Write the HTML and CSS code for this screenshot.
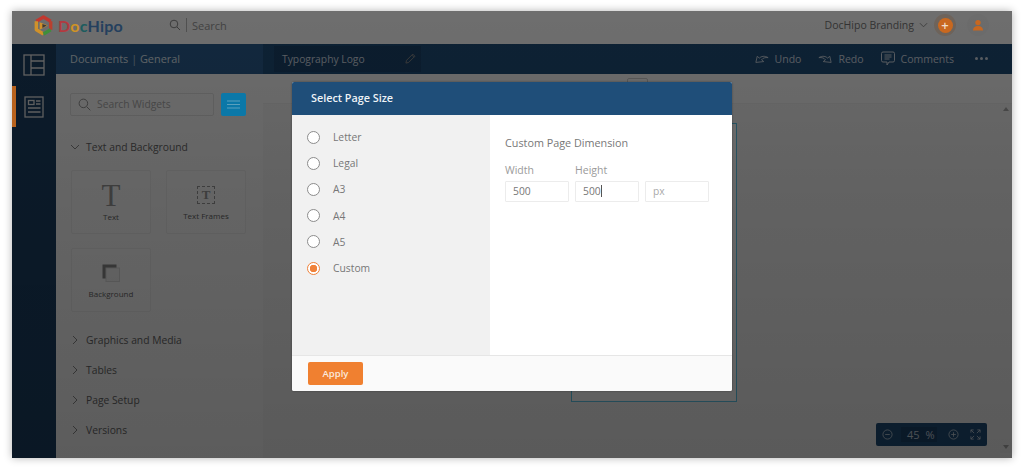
FILE: index.html
```html
<!DOCTYPE html>
<html lang="en">
<head>
<meta charset="utf-8">
<title>DocHipo</title>
<link rel="stylesheet" href="styles.css">
</head>
<body>
<div class="window">
  <header class="topbar">
    <div class="logo">
      <svg class="logo-mark" viewBox="0 0 22 22" width="21" height="21" fill="none" stroke-width="3.600" stroke-linejoin="round">
        <path d="M3.500 6.500L11 2.200 18.500 6.500" stroke="#c2382f"/>
        <path d="M18.500 6.500V15.500" stroke="#b9402f"/>
        <path d="M3.500 6.500V15.500L11 19.800" stroke="#d0912a"/>
        <path d="M11 19.800L18.500 15.500" stroke="#3f8f3c"/>
        <path d="M7 7.500L15.500 11 7 15.500Z" fill="#d0912a" stroke="none"/>
        <path d="M9.800 9.300L14.500 11 9.800 13.500Z" fill="#3a3a3a" stroke="none"/>
      </svg>
      <span class="logo-text"><span class="l-d">D</span><span class="l-o">o</span><span class="l-c">c</span><span class="l-h">Hipo</span></span>
    </div>
    <div class="top-search">
      <svg viewBox="0 0 12 12" width="12" height="12" class="ico-line"><circle cx="5" cy="5" r="3.800"/><path d="M8 8l3 3"/></svg>
      <span class="sep"></span>
      <span>Search</span>
    </div>
    <div class="top-right">
      <span class="brand">DocHipo Branding</span>
      <svg viewBox="0 0 10 6" width="9" height="6" class="ico-line"><path d="M1 1l4 4 4-4"/></svg>
      <span class="plus-ring"><span class="plus">+</span></span>
      <span class="user-ring">
        <svg viewBox="0 0 12 12" width="12" height="12"><circle cx="6" cy="3.600" r="2.700"/><path d="M1 11.500c0-3 2-4.500 5-4.500s5 1.500 5 4.500z"/></svg>
      </span>
    </div>
  </header>

  <div class="main">
    <nav class="rail">
      <div class="rail-item">
        <svg viewBox="0 0 22 22" width="22" height="22" class="rail-ico"><rect x="1" y="1" width="20" height="20"/><path d="M8 1v20M8 7h13M8 14h13"/></svg>
      </div>
      <div class="rail-item active">
        <svg viewBox="0 0 20 22" width="20" height="22" class="rail-ico"><rect x="1" y="1" width="18" height="20"/><rect x="4.500" y="4.500" width="5.500" height="4"/><path d="M12 5h4.500M12 8h4.500M4 12h12.500M4 16h12.500"/></svg>
      </div>
    </nav>

    <aside class="panel">
      <div class="panel-head">Documents <span class="bar">|</span> General</div>
      <div class="widget-search">
        <div class="search-box">
          <svg viewBox="0 0 14 14" width="13" height="13" class="ico-line"><circle cx="5.800" cy="5.800" r="4.600"/><path d="M9.300 9.300l4 4"/></svg>
          <span>Search Widgets</span>
        </div>
        <div class="list-btn">
          <svg viewBox="0 0 13 9" width="13" height="9"><path d="M0 1h13M0 4.500h13M0 8h13" stroke="#5aa0bd" stroke-width="1.200"/></svg>
        </div>
      </div>
      <div class="section open">
        <svg viewBox="0 0 10 6" width="10" height="6" class="ico-line"><path d="M1 1l4 4 4-4"/></svg>
        <span>Text and Background</span>
      </div>
      <div class="cards">
        <div class="card">
          <span class="big-t">T</span>
          <span class="card-label">Text</span>
        </div>
        <div class="card">
          <span class="frame-t">T</span>
          <span class="card-label">Text Frames</span>
        </div>
        <div class="card">
          <svg viewBox="0 0 18 18" width="18" height="18" class="bg-ico"><rect x="0.500" y="0.500" width="14" height="14" fill="#8a8a8a"/><rect x="4" y="4" width="13.500" height="13.500" fill="#f5f5f5" stroke="#dcdcdc"/></svg>
          <span class="card-label">Background</span>
        </div>
      </div>
      <div class="section"><svg viewBox="0 0 6 10" width="6" height="10" class="ico-line"><path d="M1 1l4 4-4 4"/></svg><span>Graphics and Media</span></div>
      <div class="section"><svg viewBox="0 0 6 10" width="6" height="10" class="ico-line"><path d="M1 1l4 4-4 4"/></svg><span>Tables</span></div>
      <div class="section"><svg viewBox="0 0 6 10" width="6" height="10" class="ico-line"><path d="M1 1l4 4-4 4"/></svg><span>Page Setup</span></div>
      <div class="section"><svg viewBox="0 0 6 10" width="6" height="10" class="ico-line"><path d="M1 1l4 4-4 4"/></svg><span>Versions</span></div>
      <div class="collapse-tab"><svg viewBox="0 0 4 6" width="4" height="6" class="ico-line"><path d="M3.500 .5L1 3l2.500 2.500"/></svg></div>
    </aside>

    <section class="work">
      <div class="toolbar">
        <div class="doc-title">
          <span>Typography Logo</span>
          <svg viewBox="0 0 12 12" width="11" height="11" class="ico-line"><path d="M1 11l.7-3L8.500 1.200l2.300 2.300L4 10.300zM7.500 2.300l2.300 2.300"/></svg>
        </div>
        <div class="tools">
          <span class="tool"><svg viewBox="0 0 16 12" width="14" height="11" class="ico-tool"><path d="M1 10.500L2.500 3.500 5 5.500C7 3.500 11 2.500 15 5 11.500 4.500 9 5.500 7.500 7.500L10 9.500z"/></svg>Undo</span>
          <span class="tool"><svg viewBox="0 0 16 12" width="14" height="11" class="ico-tool"><path d="M15 10.500L13.500 3.500 11 5.500C9 3.500 5 2.500 1 5 4.500 4.500 7 5.500 8.500 7.500L6 9.500z"/></svg>Redo</span>
          <span class="tool"><svg viewBox="0 0 14 15" width="14" height="15" class="ico-tool"><path d="M2 1h10a1.500 1.500 0 0 1 1.500 1.500v7A1.500 1.500 0 0 1 12 11H8l-2 3v-3H2A1.500 1.500 0 0 1 .5 9.500v-7A1.500 1.500 0 0 1 2 1zM3.500 4h7M3.500 6h7M3.500 8h5"/></svg>Comments</span>
          <span class="dots">
            <span class="dot"></span><span class="dot"></span><span class="dot"></span>
          </span>
        </div>
      </div>
      <div class="ruler"><span class="ruler-tab"></span></div>
      <div class="canvas">
        <div class="page"></div>
        <div class="zoom-bar">
          <svg viewBox="0 0 12 12" width="11" height="11" class="ico-zoom"><circle cx="6" cy="6" r="5"/><path d="M3.500 6h5"/></svg>
          <span class="zoom-val"><span>45</span><span>%</span></span>
          <svg viewBox="0 0 12 12" width="11" height="11" class="ico-zoom"><circle cx="6" cy="6" r="5"/><path d="M3.500 6h5M6 3.500v5"/></svg>
          <svg viewBox="0 0 12 12" width="11" height="11" class="ico-zoom"><path d="M1 4V1h3M8 1h3v3M11 8v3H8M4 11H1V8M1 1l3.500 3.500M11 1L7.500 4.500M11 11L7.500 7.500M1 11l3.500-3.500"/></svg>
        </div>
        <span class="scroll-up"></span>
        <span class="scroll-down"></span>
        <span class="scroll-corner"></span>
      </div>
    </section>
  </div>

  <div class="overlay"></div>

  <div class="modal">
    <div class="modal-head">Select Page Size</div>
    <div class="modal-body">
      <div class="size-list">
        <label class="radio-row"><span class="radio"></span>Letter</label>
        <label class="radio-row"><span class="radio"></span>Legal</label>
        <label class="radio-row"><span class="radio"></span>A3</label>
        <label class="radio-row"><span class="radio"></span>A4</label>
        <label class="radio-row"><span class="radio"></span>A5</label>
        <label class="radio-row"><span class="radio checked"></span>Custom</label>
      </div>
      <div class="custom">
        <h2 class="custom-title">Custom Page Dimension</h2>
        <div class="fields">
          <div class="field">
            <span class="field-label">Width</span>
            <div class="input">500</div>
          </div>
          <div class="field">
            <span class="field-label">Height</span>
            <div class="input">500<span class="caret"></span></div>
          </div>
          <div class="field">
            <div class="input unit">px</div>
          </div>
        </div>
      </div>
    </div>
    <div class="modal-foot"><button class="apply" type="button">Apply</button></div>
  </div>
</div>
</body>
</html>
```
FILE: styles.css
```css
* { box-sizing: border-box; }
html, body { margin: 0; height: 100%; background: #fff; overflow: hidden; }
body { font-family: "Open Sans", "Noto Sans", sans-serif; padding: 11px 12px 12px; }
svg { display: block; flex: none; }

.window {
  position: relative;
  width: 1000px;
  height: 447px;
  background: #fff;
  box-shadow: 0 0 8px rgba(0,0,0,.3);
}
.overlay {
  position: absolute;
  inset: 0;
  z-index: 1;
  background: linear-gradient(180deg, rgba(0,0,0,.57) 0%, rgba(0,0,0,.6) 40%, rgba(0,0,0,.63) 100%);
}

.ico-line { fill: none; stroke: #8a8a8a; stroke-width: 1; }

/* top bar */
.topbar {
  height: 33px;
  display: flex;
  align-items: center;
  background: #fff;
  padding: 0 0 5px 21px;
  color: #777;
  font-size: 11px;
}
.logo { display: flex; align-items: center; gap: 4px; width: 136px; position: relative; z-index: 2; }
.logo-text { font-family: "Lato", "Open Sans", sans-serif; font-weight: 700; font-size: 16px; letter-spacing: .2px; }
.l-d { color: #b23a40; }
.l-o { color: #cf9326; }
.l-c { color: #1c5c5e; }
.l-h { color: #24405e; }
.top-search { display: flex; align-items: center; gap: 5px; font-size: 11px; color: #999; }
.sep { width: 1px; height: 14px; background: #bbb; }
.top-right { margin-left: auto; display: flex; align-items: center; color: #777; font-size: 10.500px; padding-right: 23px; }
.brand { margin-right: 5px; }
.plus-ring {
  width: 22px; height: 22px; border-radius: 50%;
  background: #ffe7d3; display: flex; align-items: center; justify-content: center;
  margin: 0 11px 0 6px;
}
.plus {
  position: relative; z-index: 2;
  width: 15px; height: 15px; border-radius: 50%; background: #c9681f; color: #f0dccb;
  font-size: 13px; line-height: 14px; text-align: center; font-weight: 600;
}
.user-ring { width: 22px; height: 22px; border-radius: 50%; background: #fafafa; display: flex; align-items: center; justify-content: center; }
.user-ring svg { position: relative; z-index: 2; fill: #c8671f; }

/* main */
.main { display: flex; height: 414px; }
.rail { width: 44px; background: #1b3f63; flex: none; }
.rail-item { height: 42px; display: flex; align-items: center; justify-content: center; position: relative; }
.rail-item.active { height: 41px; }
.rail-item.active::before { content: ""; position: absolute; z-index: 2; left: 0; top: 0; bottom: 0; width: 4px; background: #b8621d; }
.rail-ico { fill: none; stroke: #e4e4e4; stroke-width: 1.300; }

/* panel */
.panel { width: 207px; flex: none; background: #fafafa; position: relative; display: flex; flex-direction: column; color: #666; }
.panel-head { height: 30px; background: #2a5d8f; color: #dfe6ee; font-size: 10.900px; line-height: 30px; padding-left: 14px; }
.bar { opacity: .7; }
.widget-search { display: flex; gap: 7px; padding: 19px 0 0 14px; align-items: center; }
.search-box { width: 144px; height: 23px; border: 1px solid #e2e2e2; border-radius: 2px; background: #fafafa; display: flex; align-items: center; gap: 6px; padding: 0 0 1px 7px; color: #aaa; font-size: 10.300px; }
.list-btn { width: 25px; height: 23px; border-radius: 2px; background: #0b78a8; display: flex; align-items: center; justify-content: center; position: relative; z-index: 2; }
.section { display: flex; align-items: center; height: 30px; padding-left: 16px; gap: 8px; font-size: 10.300px; color: #666; }
.section.open { margin-top: 19px; height: 24px; gap: 6px; padding-left: 14px; }
.cards { display: grid; grid-template-columns: 80px 80px; gap: 14px 15px; padding: 11px 0 0 15px; margin-bottom: 13px; }
.card { height: 64px; border: 1px solid #eeeeee; border-radius: 2px; background: #fbfbfb; display: flex; flex-direction: column; align-items: center; color: #666; }
.card-label { font-size: 8px; line-height: 11px; margin-top: auto; margin-bottom: 12px; }
.big-t { font-family: "Liberation Serif", serif; font-size: 31px; line-height: 30px; margin-top: 10px; color: #999; }
.frame-t { font-family: "Liberation Serif", serif; font-weight: 700; font-size: 13px; line-height: 16px; width: 18px; height: 18px; margin-top: 15px; border: 1px dashed #999; text-align: center; color: #999; }
.bg-ico { margin-top: 15px; }
.collapse-tab {
  position: absolute; right: -8px; top: 192px;
  width: 8px; height: 33px; background: #c3d5e6; border-radius: 0 3px 3px 0;
  display: flex; align-items: center; justify-content: center;
}

/* work */
.work { flex: 1; display: flex; flex-direction: column; min-width: 0; }
.toolbar { height: 30px; background: #1f4e79; display: flex; align-items: center; color: #cfd8e2; font-size: 10.500px; flex: none; padding-bottom: 1px; }
.doc-title { width: 147px; margin-left: 11px; height: 26px; background: #1b436a; display: flex; align-items: center; justify-content: space-between; padding: 0 5px 0 8px; font-size: 10.300px; }
.tools { margin-left: auto; display: flex; align-items: center; gap: 17px; padding-right: 24px; }
.tool { display: flex; align-items: center; gap: 6px; }
.ico-tool { fill: none; stroke: #cfd8e2; stroke-width: 1; }
.dots { display: flex; gap: 2px; margin-left: 4px; }
.dot { width: 3px; height: 3px; border-radius: 50%; background: #cfd8e2; }
.ruler { height: 30px; background: #fafafa; border-bottom: 1px solid #eee; flex: none; position: relative; }
.ruler-tab { display: block; position: absolute; left: 364px; top: 4px; width: 21px; height: 10px; border: 1px solid #ccc; border-radius: 2px 2px 0 0; }
.canvas { flex: 1; background: #f4f4f4; position: relative; }
.page { position: absolute; left: 308px; top: 19px; width: 166px; height: 279px; border: 1px solid #5fc8ea; background: #fff; }
.zoom-bar {
  position: absolute; right: 25px; top: 319px;
  width: 111px; height: 23px;
  background: #1f4e79; border-radius: 2px;
  display: flex; align-items: center; gap: 8px; padding-left: 6px;
  color: #c8d4e0; font-size: 11px;
}
.ico-zoom { fill: none; stroke: #c8d4e0; stroke-width: .9; }
.ico-zoom:last-child { margin-left: 3px; }
.zoom-val { display: flex; align-items: center; gap: 6px; width: 36px; height: 15px; padding-left: 6px; margin-right: 3px; background: #1b436a; }
.scroll-up, .scroll-down { position: absolute; right: 3px; width: 0; height: 0; border-left: 3px solid transparent; border-right: 3px solid transparent; }
.scroll-up { top: 3px; border-bottom: 4px solid #aaa; }
.scroll-down { bottom: 9px; border-top: 4px solid #aaa; }
.scroll-corner { position: absolute; right: 0; bottom: 0; width: 12px; height: 5px; background: #ffffff; opacity: .35; }

/* modal */
.modal {
  position: absolute;
  z-index: 3;
  left: 280px; top: 71px;
  width: 440px; height: 309px;
  background: #fff;
  border-radius: 2px;
  display: flex; flex-direction: column;
  overflow: hidden;
  box-shadow: 0 0 2px rgba(0,0,0,.4);
}
.modal-head { height: 33px; background: #1f4e79; color: #eef3f7; font-size: 10.800px; font-weight: 600; line-height: 31px; padding-left: 19px; flex: none; }
.modal-body { flex: 1; display: flex; min-height: 0; }
.size-list { width: 198px; background: #f1f1f1; padding-top: 9px; flex: none; }
.radio-row { display: flex; align-items: center; height: 26.200px; padding-left: 15px; gap: 13px; font-size: 10.300px; color: #777; }
.radio { width: 13px; height: 13px; border-radius: 50%; border: 1.500px solid #8c8c8c; background: #fff; flex: none; }
.radio.checked { border-color: #f0823a; background: radial-gradient(circle, #f0823a 0 3.500px, #fff 4px); }
.custom { flex: 1; padding: 20px 0 0 15px; }
.custom-title { margin: 0; font-size: 10.800px; line-height: 16px; font-weight: 400; color: #777; }
.fields { display: flex; gap: 6px; margin-top: 12px; align-items: flex-end; }
.field { width: 64px; display: flex; flex-direction: column; }
.field-label { font-size: 10.500px; line-height: 14px; color: #9a9a9a; margin-bottom: 4px; }
.input { height: 21px; border: 1px solid #ececec; border-radius: 1px; font-size: 10.300px; line-height: 19px; padding-left: 7px; color: #777; background: #fff; }
.input.unit { color: #aaa; }
.caret { display: inline-block; width: 1px; height: 12px; background: #555; vertical-align: -2px; }
.modal-foot { height: 36px; background: #fafafa; border-top: 1px solid #e6e6e6; padding: 6px 0 0 16px; flex: none; }
.apply { display: block; width: 55px; height: 23px; border: 0; border-radius: 2px; background: #f08030; color: #fbe9dc; font-family: "Open Sans", sans-serif; font-size: 9.500px; font-weight: 600; padding: 0; }
```
